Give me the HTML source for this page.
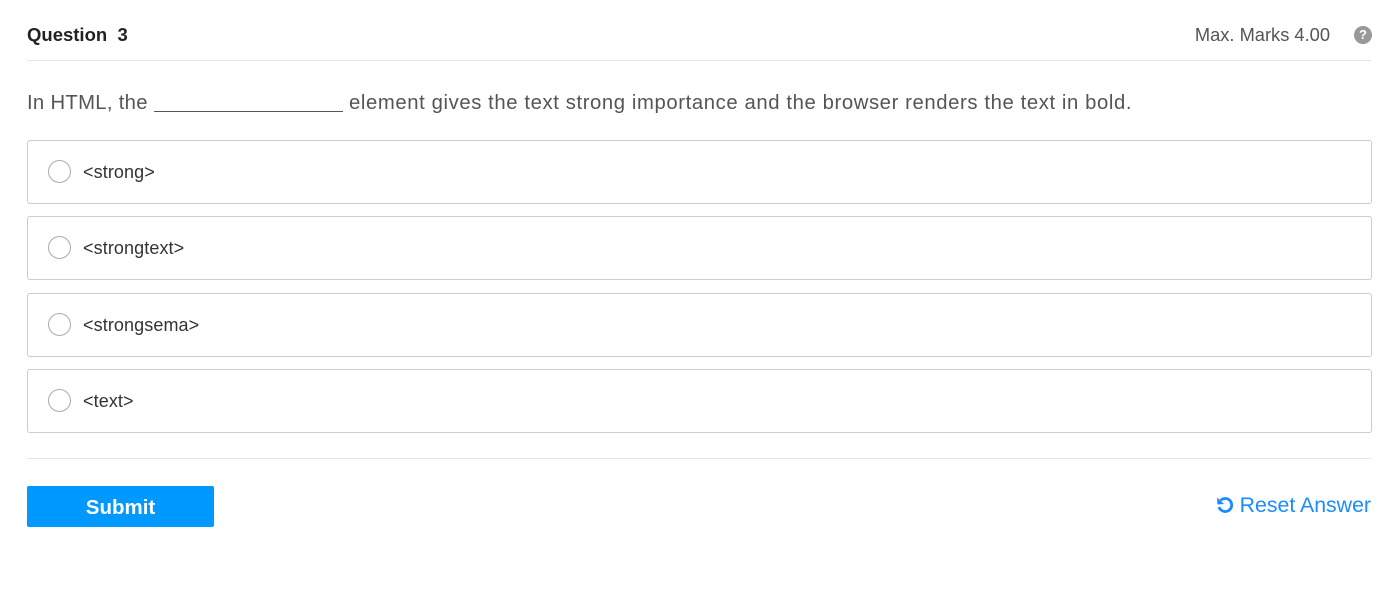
<!DOCTYPE html>
<html><head><style>
body{margin:0;background:#fff;font-family:"Liberation Sans",sans-serif;width:1394px;height:604px;position:relative;overflow:hidden}
.a{position:absolute}
.opt{position:absolute;left:27px;width:1343px;height:62px;border:1px solid #ccc;border-radius:3px}
.opt .r{position:absolute;left:20px;top:19px;width:21px;height:21px;border:1px solid #aaa;border-radius:50%}
.opt .t{position:absolute;left:55px;top:0;line-height:62px;font-size:18px;color:#333;letter-spacing:.1px}
</style></head><body>
<div class="a" style="left:27px;top:24px;font-size:18.5px;font-weight:bold;color:#222">Question&nbsp;&nbsp;3</div>
<div class="a" style="right:64px;top:24px;font-size:18.3px;color:#555">Max. Marks 4.00</div>
<div class="a" style="left:1354px;top:26px;width:18px;height:18px;border-radius:50%;background:#999;color:#fff;font-size:13px;font-weight:bold;text-align:center;line-height:18px">?</div>
<div class="a" style="left:27px;top:60px;width:1344px;height:1px;background:#e5e5e5"></div>
<div class="a" style="left:27px;top:91px;font-size:20.3px;letter-spacing:.3px;color:#555;white-space:nowrap">In HTML, the <span style="display:inline-block;width:189px;height:20px;border-bottom:1px solid #555;vertical-align:-3px"></span><span style="letter-spacing:.6px"> element gives the text strong importance and the browser renders the text in bold.</span></div>
<div class="opt" style="top:140px"><div class="r"></div><div class="t">&lt;strong&gt;</div></div>
<div class="opt" style="top:216px"><div class="r"></div><div class="t">&lt;strongtext&gt;</div></div>
<div class="opt" style="top:293px"><div class="r"></div><div class="t">&lt;strongsema&gt;</div></div>
<div class="opt" style="top:369px"><div class="r"></div><div class="t">&lt;text&gt;</div></div>
<div class="a" style="left:27px;top:458px;width:1344px;height:1px;background:#e5e5e5"></div>
<div class="a" style="left:27px;top:486px;width:187px;height:41px;background:#0099ff;border-radius:2px;color:#fff;font-weight:bold;font-size:20.5px;text-align:center;line-height:43px">Submit</div>
<div class="a" style="right:23px;top:493px;font-size:21.3px;color:#1a8cff;white-space:nowrap">
<svg width="18" height="18" viewBox="0 0 18 18" style="vertical-align:-2px;margin-right:6px"><path d="M4.5 4.5A6.5 6.5 0 1 1 3 11" fill="none" stroke="#1a8cff" stroke-width="2.8"/><path d="M1 1.5L1.5 8.5L8 8Z" fill="#1a8cff"/></svg>Reset Answer</div>
</body></html>
